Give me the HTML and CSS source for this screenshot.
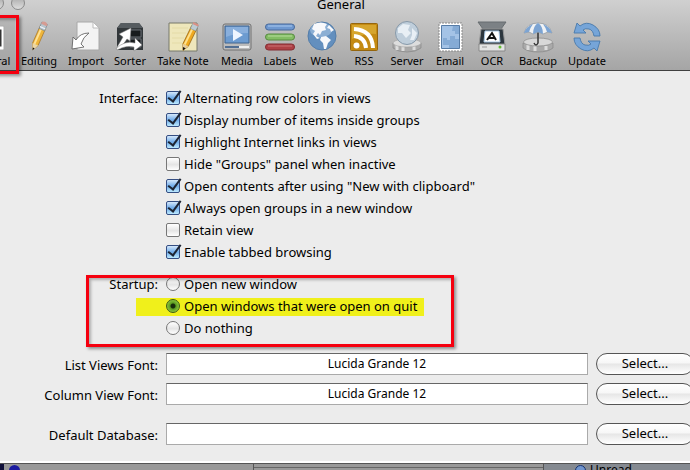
FILE: index.html
```html
<!DOCTYPE html>
<html lang="en">
<head>
<meta charset="utf-8">
<title>General</title>
<link rel="stylesheet" href="styles.css">
</head>
<body>
<main class="window">
<header class="chrome">
  <div class="titlebar"><span class="light"></span><span class="light"></span><h1>General</h1></div>
  <nav class="toolbar" aria-label="Preferences">
    <button class="tool current"><svg viewBox="0 0 30 30"><rect x="1" y="5" width="28" height="24" rx="1" fill="#fff" stroke="#aaa"/><path d="M5 10H25V24H5Z" fill="#eee" stroke="#333" stroke-width="3"/></svg><span>General</span></button>
    <button class="tool"><svg viewBox="0 0 30 30"><g transform="rotate(24 15 15)"><path d="M12 5H18V24L15 30L12 24Z" fill="#efb63b" stroke="#a9782b" stroke-width=".7"/><path d="M14 6V24" stroke="#ffe194" stroke-width="2"/><path d="M12 24H18L15 31Z" fill="#ead6a7"/><path d="M14 28H16L15 31Z" fill="#111"/><path d="M12 1H18V8H12Z" fill="#b9c5cd" stroke="#70818b" stroke-width=".6"/><path d="M12 1Q15-2 18 1V3H12Z" fill="#d69b91"/><path d="M12 6H18" stroke="#eef5fa"/></g></svg><span>Editing</span></button>
    <button class="tool"><svg viewBox="0 0 30 30"><path d="M6 1H22L28 7V29H6Z" fill="#f3f3f3" stroke="#a8a8a8"/><path d="M22 1V7H28Z" fill="#fff" stroke="#bbb"/><path d="M1 28L2 16L5 19Q9 12 18 12Q12 16 10 23L13 26Z" fill="#fff" stroke="#666" stroke-width=".9"/></svg><span>Import</span></button>
    <button class="tool"><svg viewBox="0 0 30 30"><path d="M2 7L6 2H24L28 7V29H2Z" fill="#32373a"/><path d="M2 7L6 2H24L28 7Z" fill="#565c60"/><path d="M15 9H26V16H15ZM15 18H26V26H15Z" fill="#181c1e" stroke="#686f74"/><path d="M1 28L8 16L4 13L16 7L15 20L12 18L5 28Z" fill="#fff" stroke="#777" stroke-width=".5"/><path d="M1 28Q9 19 20 22V17L27 24L19 30V26Q11 24 2 29Z" fill="#fff" stroke="#777" stroke-width=".5"/></svg><span>Sorter</span></button>
    <button class="tool"><svg viewBox="0 0 30 30"><path d="M1 2H29V30H1Z" fill="#eee7bb" stroke="#77786b"/><path d="M4 7H20M4 12H18M4 17H16M4 22H14" stroke="#e4dba7"/><g transform="rotate(26 22 15)"><path d="M19 5H25V25L22 31L19 25Z" fill="#efa91e" stroke="#966416" stroke-width=".7"/><path d="M21 7V25" stroke="#ffe08a" stroke-width="2"/><path d="M19 25H25L22 31Z" fill="#e5cd9d"/><path d="M20.500 28H23.500L22 31Z" fill="#111"/><path d="M19 2H25V8H19Z" fill="#bdcbd2" stroke="#7b8b94" stroke-width=".5"/><path d="M19 1H25V3H19Z" fill="#d99086"/></g></svg><span>Take Note</span></button>
    <button class="tool"><svg viewBox="0 0 30 30"><rect x="1" y="3" width="28" height="26" rx="2" fill="#bbb" stroke="#717171"/><path d="M3 5H27V22H3Z" fill="#6c9bd0" stroke="#41658f"/><path d="M4 6H26V12Q14 12 4 16Z" fill="#89afdc"/><path d="M11 8L21 14L11 20Z" fill="#eef5ff"/><path d="M3 26H17" stroke="#526f93" stroke-width="2"/><path d="M17 26H27" stroke="#eee" stroke-width="2"/></svg><span>Media</span></button>
    <button class="tool"><svg viewBox="0 0 30 30"><rect x=".5" y="3" width="29" height="6" rx="3" fill="#6e98d0" stroke="#48699a"/><path d="M3 5H27" stroke="#a9c8ed"/><rect x=".5" y="13" width="29" height="6" rx="3" fill="#83bd64" stroke="#568b40"/><path d="M3 15H27" stroke="#b7dc9c"/><rect x=".5" y="23" width="29" height="6" rx="3" fill="#ae4146" stroke="#842c32"/><path d="M3 25H27" stroke="#cb7375"/></svg><span>Labels</span></button>
    <button class="tool"><svg viewBox="0 0 30 30"><circle cx="15" cy="15" r="14" fill="#638fbe" stroke="#547da9"/><ellipse cx="14" cy="9" rx="11" ry="7" fill="#a8c5e2" opacity=".6"/><path d="M7 3Q14 0 20 3L18 6L19 9L15 10L13 14L11 12L9 15L13 17L10 18L6 13L8 10L5 8Z" fill="#f7f8fb"/><path d="M14 16L19 15L24 19L21 22L19 28H17L16 22L13 19ZM22 4L27 9L24 11L23 8L20 7Z" fill="#f7f8fb"/></svg><span>Web</span></button>
    <button class="tool"><svg viewBox="0 0 30 30"><rect x="1.500" y="2.500" width="27" height="27" rx="1" fill="#c48a12" stroke="#95660e"/><path d="M3 4H27V13Q17 12 3 18Z" fill="#d6a52d"/><circle cx="7.500" cy="24.500" r="3" fill="#fff"/><path d="M5 15Q16 16 17 27M5 8Q23 9 24 27" fill="none" stroke="#fff" stroke-width="4"/></svg><span>RSS</span></button>
    <button class="tool"><svg viewBox="0 0 30 30"><path d="M1 22V27Q6 31 15 31Q24 31 29 27V22Z" fill="#aaa" stroke="#777" stroke-width=".5"/><path d="M5 24V29M11 25V30M22 25V29" stroke="#ddd" stroke-width="3"/><ellipse cx="15" cy="22" rx="14" ry="4" fill="#ddd" stroke="#999" stroke-width=".5"/><circle cx="15" cy="12" r="11.500" fill="#bfcedb" stroke="#8799a9"/><path d="M6 7L11 3L18 4L16 9L19 12L14 17L10 12L6 12ZM20 7L25 12L22 19L18 19L20 14Z" fill="#e8eff5"/></svg><span>Server</span></button>
    <button class="tool"><svg viewBox="0 0 30 30"><path d="M4 2H27V30H4Z" fill="#fff" stroke="#888" stroke-dasharray="2 1"/><path d="M6.500 4.500H24.500V27.500H6.500Z" fill="#a4c3e6" stroke="#567ca6"/><path d="M18 5H24V13H20V10H17ZM8 17H12V19H15V15H20V18H24V27H14V24H8Z" fill="#85abd5"/></svg><span>Email</span></button>
    <button class="tool"><svg viewBox="0 0 30 30"><path d="M1 1H29L24 8H6Z" fill="#7c8185" stroke="#676d70"/><path d="M4 8H26L28 24H2Z" fill="#2b353d" stroke="#999"/><path d="M8 10H22L23 21H7Z" fill="#fff" stroke="#a8c7e3"/><path d="M10 19L15 12L19 19M12 17H18" stroke="#111" stroke-width="2" fill="none"/><path d="M2 23H28V30H2Z" fill="#e3e4e3" stroke="#888"/><path d="M5 26H10" stroke="#999"/><circle cx="23" cy="26" r="1.500" fill="#65bd35"/></svg><span>OCR</span></button>
    <button class="tool"><svg viewBox="0 0 30 30"><path d="M0 22V27Q5 31 15 31Q25 31 30 27V22Z" fill="#aaa" stroke="#777" stroke-width=".5"/><path d="M5 24V29M12 25V30M23 25V29" stroke="#ddd" stroke-width="3"/><ellipse cx="15" cy="21" rx="14.500" ry="4" fill="#d8d8d8" stroke="#888" stroke-width=".7"/><path d="M15 11V22Q13 26 11 22" stroke="#333" stroke-width="1.500" fill="none"/><path d="M1 12Q4 2 15 2Q26 2 29 12L25 11L20 13L15 11L10 13L6 11Z" fill="#f0f2f4" stroke="#8d949b" stroke-width=".7"/><path d="M1 12Q3 6 10 3Q7 7 6 11ZM10 13Q10 5 15 2Q20 5 20 13L15 11ZM29 12Q27 6 20 3Q23 7 24 11Z" fill="#7ca4d3"/></svg><span>Backup</span></button>
    <button class="tool"><svg viewBox="0 0 30 30"><path id="turn" d="M2 12L5 2L8 5Q14 0 21 4Q28 8 28 15H22Q21 9 17 8Q13 7 11 9L14 12Z" fill="#76a5d8" stroke="#4779ac" stroke-width=".9"/><use href="#turn" transform="rotate(180 15 16)"/></svg><span>Update</span></button>
  </nav>
</header>
<form class="prefs">
  <fieldset class="group">
    <legend>Interface:</legend>
    <div class="options">
      <label><input type="checkbox" checked>Alternating row colors in views</label>
      <label><input type="checkbox" checked>Display number of items inside groups</label>
      <label><input type="checkbox" checked>Highlight Internet links in views</label>
      <label><input type="checkbox">Hide "Groups" panel when inactive</label>
      <label><input type="checkbox" checked>Open contents after using "New with clipboard"</label>
      <label><input type="checkbox" checked>Always open groups in a new window</label>
      <label><input type="checkbox">Retain view</label>
      <label><input type="checkbox" checked>Enable tabbed browsing</label>
    </div>
  </fieldset>
  <fieldset class="group startup">
    <legend>Startup:</legend>
    <div class="options">
      <label><input type="radio" name="startup">Open new window</label>
      <label class="marked"><input type="radio" name="startup" checked>Open windows that were open on quit</label>
      <label><input type="radio" name="startup">Do nothing</label>
    </div>
  </fieldset>
  <div class="fields">
    <div class="field"><label for="list">List Views Font:</label><input id="list" type="text" value="Lucida Grande 12"><button type="button">Select...</button></div>
    <div class="field"><label for="column">Column View Font:</label><input id="column" type="text" value="Lucida Grande 12"><button type="button">Select...</button></div>
    <div class="field database"><label for="database">Default Database:</label><input id="database" type="text"><button type="button">Select...</button></div>
  </div>
</form>
</main>
<footer class="behind"><div class="sidebar"><i class="orb"></i></div><div class="list"></div><div class="status"><i class="orb"></i><span>Unread</span></div></footer>
</body>
</html>
```
FILE: styles.css
```css
*, ::before, ::after { box-sizing: border-box; }
body { margin: 0; height: 100vh; overflow: hidden; display: flex; flex-direction: column; background: #ececec; color: #000; font: 13px/22px "Lucida Grande", "Noto Sans", sans-serif; }
button, input { font: inherit; color: inherit; }

.window { flex: none; overflow: hidden; border-bottom: 2px solid #fff; }
.chrome { height: 71px; border-bottom: 1px solid #404040; background: linear-gradient(#d0d0d0, #a5a5a5); }
.titlebar { position: relative; height: 16px; padding-right: 8px; }
h1 { margin: 0; height: 16px; font-size: 13px; line-height: 8px; font-weight: 400; text-align: center; }
.light { position: absolute; top: -4px; left: 11px; width: 14px; height: 14px; border: 1px solid #888; border-radius: 50%; background: linear-gradient(#aaa, #ddd); }
.light:first-child { left: -10px; }

.toolbar { display: grid; grid-template-columns: 50px 48px 46px 42px 64px 44px 42px 42px 42px 44px 42px 42px 50px 48px; margin-left: -35px; }
.tool { position: relative; display: flex; flex-direction: column; align-items: center; height: 54px; padding: 4px 0 0; border: 0; background: none; font-size: 11px; line-height: 14px; white-space: nowrap; }
.tool svg { width: 30px; height: 32px; margin-bottom: 2px; overflow: visible; }
.current { background: #a0a0a066; }
.current::after { content: ""; position: absolute; z-index: 1; top: -1px; right: -4px; width: 60px; height: 59px; border: 3px solid #f5000f; box-shadow: 2px 2px 3px #0006, inset 2px 2px 3px #0004; }

.prefs { position: relative; z-index: 0; padding-top: 16px; }
.group { display: flex; gap: 8px; margin: 0; padding: 0; border: 0; }
legend { float: left; width: 158px; padding: 0; text-align: right; }
.options { display: grid; }
.options label { position: relative; display: flex; align-items: center; gap: 4px; width: max-content; height: 22px; }
.options input { appearance: none; position: relative; width: 14px; height: 14px; margin: 0; border: 1px solid #777; border-radius: 2px; background: linear-gradient(#fff, #e5e5e5 55%, #fff); }
.options input:checked { border-color: #344e83; background: linear-gradient(#d5e8fb, #70acea 50%, #bce9ff); }
.options input[type="checkbox"]:checked::after { content: ""; position: absolute; left: 4px; top: -4px; width: 7px; height: 14px; border: solid #1d2534; border-width: 0 2px 2px 0; transform: rotate(36deg); }
.options input[type="radio"] { border-radius: 50%; }
.options input[type="radio"]:checked { border-color: #3c5c16; background: radial-gradient(circle, #172b0b 0 2px, #5a9b20 3px, #8bc43c 6px); }
.startup { position: relative; margin-top: 10px; }
.startup::after { content: ""; position: absolute; left: 86px; top: 2px; width: 368px; height: 72px; border: 3px solid #f5000f; box-shadow: 2px 2px 3px #0006, inset 2px 2px 3px #0004; pointer-events: none; }
.marked::before { content: ""; position: absolute; z-index: -1; inset: 3px -7px 1px -30px; background: #f0f01b; }

.fields { display: grid; gap: 8px; margin-top: 14px; padding-bottom: 16px; }
.field { display: grid; grid-template-columns: 158px 1fr 98px; gap: 8px; margin-right: -4px; height: 22px; }
.field label { text-align: right; line-height: 24px; }
.field input { min-width: 0; height: 22px; padding: 0; border: 1px solid #aaa; border-top-color: #666; border-radius: 0; background: #fff; text-align: center; font-size: 12px; }
.field button { height: 22px; padding: 0 0 2px; border: 1px solid #555; border-radius: 11px; background: linear-gradient(#fff, #f7f7f7 45%, #e6e6e6 50%, #fff); line-height: 18px; }
.database { margin-top: 10px; }

.behind { flex: 1; min-height: 0; display: grid; grid-template-columns: 254px 289px 1fr; overflow: hidden; background: #999; border-top: 1px solid #555; }
.sidebar { display: flex; align-items: flex-end; border-left: 4px solid #10103a; border-right: 1px solid #555; padding-left: 5px; overflow: hidden; }
.list { height: 4px; border-bottom: 1px solid #666; }
.status { display: flex; gap: 4px; padding-left: 31px; background: #858a91; border-left: 1px solid #555; font-size: 12px; line-height: 12px; }
.orb { display: block; width: 11px; height: 11px; border-radius: 50%; background: #1c1ca0; }
.status .orb { margin-top: 1px; border: 1px solid #173472; background: #7195cd; }
```
